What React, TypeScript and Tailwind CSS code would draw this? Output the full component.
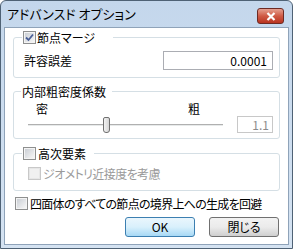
import React from 'react';

const font = { fontFamily: '"Noto Sans CJK JP", "Noto Sans", sans-serif' };

function Check({ checked = false, disabled = false }: { checked?: boolean; disabled?: boolean }) {
  return (
    <span
      className={`inline-flex h-[13px] w-[13px] shrink-0 items-center justify-center border ${
        disabled ? 'border-[#c8c8c8] bg-[#f4f4f4]' : 'border-[#8e8f8f] bg-white'
      }`}
    >
      <span
        className={`flex h-[11px] w-[11px] items-center justify-center border ${
          disabled ? 'border-[#e6e6e6] bg-[#f0f0f0]' : 'border-[#f4f4f4] bg-gradient-to-br from-[#cbcfd5] to-[#f6f6f6]'
        }`}
      >
        {checked && (
          <svg width="9" height="9" viewBox="0 0 9 9">
            <path d="M1 4.5 L3.5 7 L8 1.5" fill="none" stroke="#4a5f97" strokeWidth="1.8" />
          </svg>
        )}
      </span>
    </span>
  );
}

function VistaButton({ label, focused = false }: { label: string; focused?: boolean }) {
  return (
    <button
      className={`h-[20px] w-[70px] rounded-[3px] border text-[12px] leading-none text-black ${
        focused
          ? 'border-[#3c7fb1] bg-gradient-to-b from-[#eaf6fd] via-[#d9f0fc] to-[#a7d9f5]'
          : 'border-[#707070] bg-gradient-to-b from-[#f2f2f2] via-[#ebebeb] to-[#cfcfcf]'
      }`}
    >
      {label}
    </button>
  );
}

export default function App() {
  return (
    <div className="h-[249px] w-[293px] bg-white [font-feature-settings:'palt']" style={font}>
      <div className="flex h-[249px] w-[293px] flex-col rounded-t-[6px] border border-[#4f6275] bg-gradient-to-b from-[#c4d7ec] to-[#d5e3f2]">
        <div className="flex h-[26px] shrink-0 items-start justify-between pl-[6px] pr-[8px] pt-[4px]">
          <span className="text-[13px] leading-[17px] text-black">アドバンスド オプション</span>
          <div className="mt-[3px] flex h-[16px] w-[27px] items-center justify-center rounded-[3px] border border-[#6d2a23] bg-gradient-to-b from-[#e4a091] via-[#cf5a45] to-[#b8321f]">
            <svg width="10" height="9" viewBox="0 0 10 9">
              <path d="M1.5 1 L8.5 8 M8.5 1 L1.5 8" stroke="white" strokeWidth="2.2" />
            </svg>
          </div>
        </div>
        <div className="mx-[3px] flex h-[218px] flex-col border border-[#8fa3b9] bg-white px-[8px] pt-[2px] text-[12px] leading-[15px] text-black">
          <fieldset className="rounded-[3px] border border-[#d5dfe5] px-[10px] pb-[7px] pt-[6px]">
            <legend className="ml-[-2px] flex items-center gap-[1px] pl-[1px] pr-[18px]">
              <Check checked />
              <span>節点マージ</span>
            </legend>
            <div className="flex items-center justify-between">
              <span>許容誤差</span>
              <div className="mr-[-4px] flex h-[19px] w-[110px] items-center justify-end border border-[#abadb3] pr-[5px] text-[12px]">
                0.0001
              </div>
            </div>
          </fieldset>

          <fieldset className="mt-[6px] rounded-[3px] border border-[#d5dfe5] px-[10px] pb-[5px] pt-[2px]">
            <legend className="ml-[-3px] pl-[1px] pr-[6px]">内部粗密度係数</legend>
            <div className="flex pl-[12px]">
              <span className="w-[152px]">密</span>
              <span>粗</span>
            </div>
            <div className="flex items-center justify-between pl-[4px]">
              <div className="relative h-[16px] w-[195px]">
                <div className="absolute left-0 right-0 top-[7px] h-[2px] border-t border-[#b0b0b0] bg-[#e7eaea]" />
                <div className="absolute left-[75px] top-0 h-[16px] w-[7px] rounded-b-[3px] rounded-t-[2px] border border-[#707070] bg-gradient-to-r from-[#f2f2f2] to-[#d6d6d6]" />
              </div>
              <div className="mr-[-4px] flex h-[17px] w-[36px] items-center justify-end border border-[#c8c8c8] pr-[3px] text-[#8c8c8c]">
                1.1
              </div>
            </div>
          </fieldset>

          <fieldset className="mt-[7px] rounded-[3px] border border-[#d5dfe5] px-[10px] pb-[9px] pt-[5px]">
            <legend className="ml-[-2px] flex items-center gap-[2px] pl-[1px] pr-[8px]">
              <Check />
              <span>高次要素</span>
            </legend>
            <div className="flex items-center gap-[2px] pl-[4px] text-[#9a9a9a]">
              <Check disabled />
              <span className="tracking-[-0.6px]">ジオメトリ近接度を考慮</span>
            </div>
          </fieldset>

          <div className="mt-[5px] flex items-center gap-[2px] whitespace-nowrap pl-[2px]">
            <Check />
            <span className="tracking-[-0.7px]">四面体のすべての節点の境界上への生成を回避</span>
          </div>

          <div className="mt-[6px] flex justify-end gap-[14px] pr-[1px]">
            <VistaButton label="OK" focused />
            <VistaButton label="閉じる" />
          </div>
        </div>
      </div>
    </div>
  );
}
